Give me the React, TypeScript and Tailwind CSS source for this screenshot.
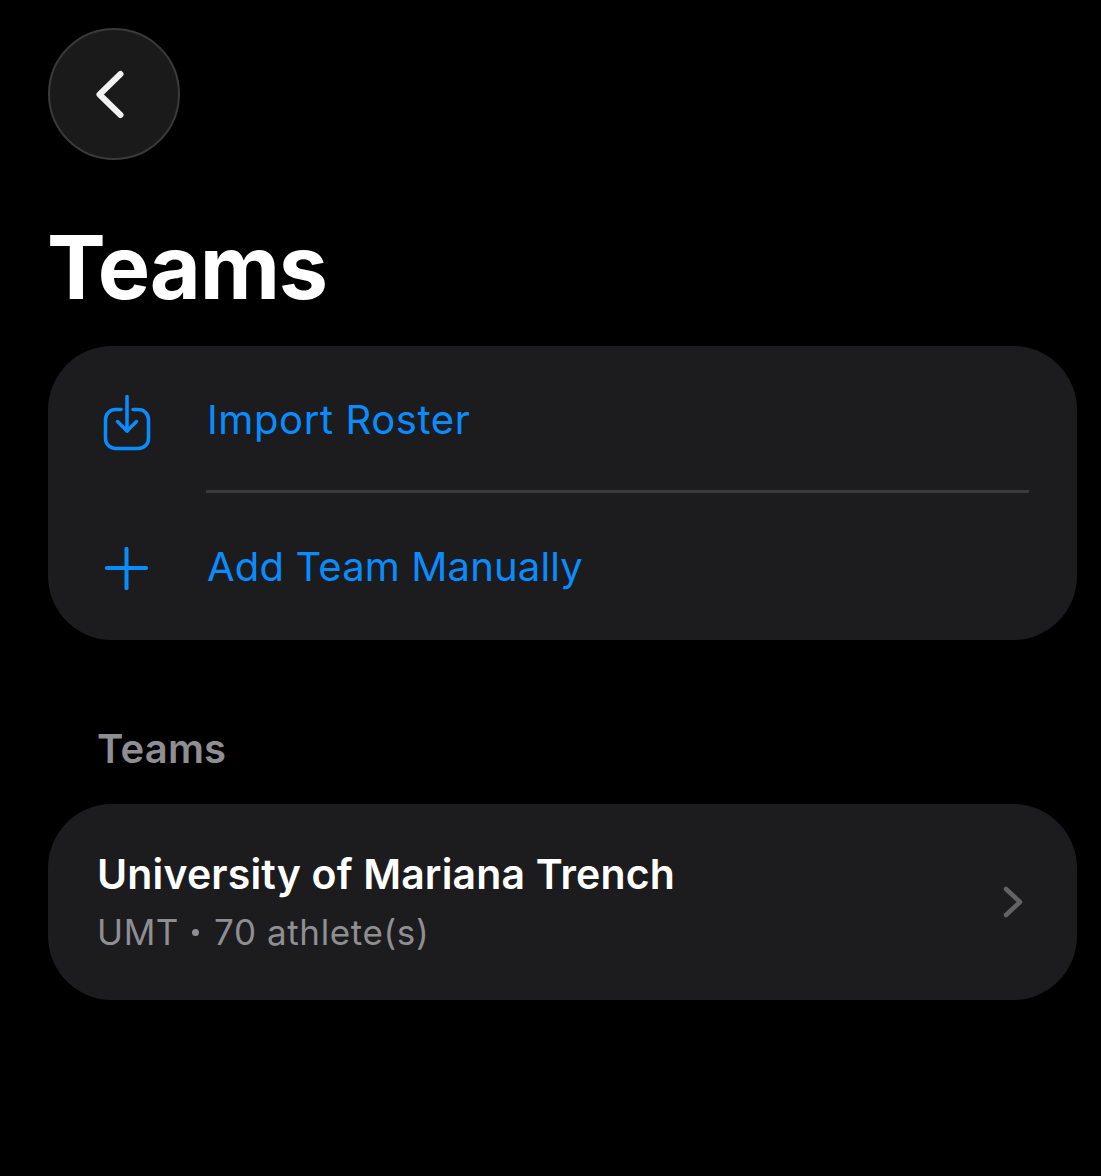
export default function App() {
  return (
    <div className="h-[1176px] overflow-hidden bg-black pt-[28px] pl-[48px] pr-[24px] font-['Inter',sans-serif]">
      {/* back button */}
      <button className="flex h-[132px] w-[132px] items-center justify-center rounded-full border-2 border-[#3a3a3a] bg-[#1a1a1b]">
        <svg width="40" height="60" viewBox="0 0 40 60" fill="none" className="mr-[8px]">
          <path d="M30.5 10 L9.5 30.5 L30.5 51" stroke="#f2f2f2" strokeWidth="6" strokeLinecap="round" strokeLinejoin="round" />
        </svg>
      </button>

      <h1 className="mt-[54px] -ml-[1px] text-[88px] leading-[106px] font-bold tracking-[-1.2px] text-white">Teams</h1>

      {/* actions */}
      <div className="mt-[26px] rounded-[64px] bg-[#1c1c1e] pl-[48px] pr-[48px]">
        <div className="flex h-[144px] items-center pt-[4px]">
          <div className="flex w-[111px] items-center">
            <svg width="52" height="64" viewBox="0 0 52 64" fill="none" stroke="#0a8cff" strokeWidth="3.5" strokeLinecap="round" strokeLinejoin="round" className="ml-[6px]">
              <path d="M19 21.5 H13.5 a10 10 0 0 0 -10 10 V50.5 a10 10 0 0 0 10 10 H36.5 a10 10 0 0 0 10 -10 V31.5 a10 10 0 0 0 -10 -10 H31" />
              <path d="M25 8.5 V43" />
              <path d="M15.5 33.5 L25 43 L34.5 33.5" />
            </svg>
          </div>
          <span className="text-[40px] tracking-[0.6px] text-[#0a8cff]">Import Roster</span>
        </div>
        <div className="ml-[110px] h-[3px] bg-[#3a3a3c]" />
        <div className="flex h-[147px] items-center">
          <div className="flex w-[110px] items-center">
            <svg width="50" height="50" viewBox="0 0 50 50" fill="none" stroke="#0a8cff" strokeWidth="4" strokeLinecap="round" className="ml-[6px]">
              <path d="M24.5 6.8 V46.2" />
              <path d="M4.8 26 H44.2" />
            </svg>
          </div>
          <span className="ml-[1px] text-[40px] tracking-[0.15px] text-[#0a8cff]">Add Team Manually</span>
        </div>
      </div>

      <div className="mt-[84px] pl-[49px] text-[40px] leading-[50px] font-semibold tracking-[0.2px] text-[#8e8e93]">Teams</div>

      {/* team list */}
      <div className="mt-[30px] flex h-[196px] items-center justify-between rounded-[64px] bg-[#1c1c1e] pl-[49px] pr-[54px]">
        <div>
          <div className="text-[41px] leading-[52px] font-semibold tracking-[0.15px] text-white">University of Mariana Trench</div>
          <div className="mt-[8px] flex items-center text-[35px] leading-[48px] tracking-[0.6px] text-[#8e8e93]">
            <span>UMT</span>
            <span className="ml-[13px] mr-[15px] h-[7px] w-[7px] rounded-full bg-[#8e8e93]" />
            <span>70 athlete(s)</span>
          </div>
        </div>
        <svg width="20" height="32" viewBox="0 0 20 32" fill="none">
          <path d="M3 3 L17 16 L3 29" stroke="#636366" strokeWidth="4.5" strokeLinecap="round" strokeLinejoin="round" />
        </svg>
      </div>
    </div>
  );
}
